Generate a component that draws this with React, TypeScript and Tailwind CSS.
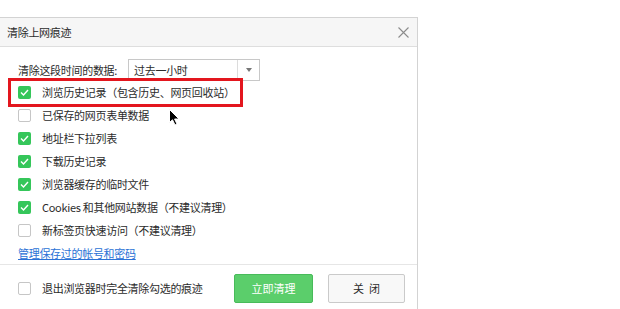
import type { ReactNode } from "react";

const font = { fontFamily: '"Noto Sans CJK SC", "Microsoft YaHei", sans-serif' };

type Item = { label: string; checked: boolean };

const items: Item[] = [
  { label: "浏览历史记录（包含历史、网页回收站）", checked: true },
  { label: "已保存的网页表单数据", checked: false },
  { label: "地址栏下拉列表", checked: true },
  { label: "下载历史记录", checked: true },
  { label: "浏览器缓存的临时文件", checked: true },
  { label: "Cookies 和其他网站数据（不建议清理）", checked: true },
  { label: "新标签页快速访问（不建议清理）", checked: false },
];

const txt = "text-[11px] tracking-[-0.3px] text-[#2b2b2b]";

function Checkbox({ checked }: { checked: boolean }) {
  if (!checked) {
    return <span className="h-[13px] w-[13px] shrink-0 rounded-[2px] border border-[#c6c6c6] bg-white" />;
  }
  return (
    <span className="flex h-[13px] w-[13px] shrink-0 items-center justify-center rounded-[2px] bg-[#35c65a]">
      <svg width="9" height="7" viewBox="0 0 9 7" fill="none">
        <path d="M1 3.5 L3.5 6 L8 1" stroke="#fff" strokeWidth="1.4" />
      </svg>
    </span>
  );
}

function Row({ item, children }: { item: Item; children?: ReactNode }) {
  return (
    <div className="relative flex h-[23px] items-center gap-[11px]">
      <Checkbox checked={item.checked} />
      <span className={txt}>{item.label}</span>
      {children}
    </div>
  );
}

function Cursor() {
  return (
    <svg className="absolute left-[151px] top-[28px]" width="11" height="17" viewBox="0 0 11 17">
      <path d="M0.5 0.5 L0.5 13.5 L3.5 10.8 L6 16 L8 15 L5.6 10 L10 10 Z" fill="#000" stroke="#fff" strokeWidth="1" />
    </svg>
  );
}

export default function App() {
  return (
    <div className="h-[309px] w-[620px] overflow-hidden bg-white pt-[17px]" style={font}>
      <div className="flex h-[300px] w-[418px] flex-col border-r border-t border-[#d3d3d3] bg-white">
        <div className="flex h-[29px] items-center justify-between border-b border-[#dedede] bg-[#f6f6f6] pl-[7px] pr-[8px]">
          <span className={txt}>清除上网痕迹</span>
          <svg width="11" height="11" viewBox="0 0 11 11">
            <path d="M0.5 0.5 L10.5 10.5 M10.5 0.5 L0.5 10.5" stroke="#8c8c8c" strokeWidth="1.1" />
          </svg>
        </div>

        <div className="pl-[18px]">
          <div className="mt-[12px] flex h-[22px] items-center">
            <span className={txt}>清除这段时间的数据:</span>
            <div className="ml-[11px] flex h-[22px] w-[132px] border border-[#c8c8c8] bg-white">
              <span className={`flex flex-1 items-center pl-[5px] ${txt}`}>过去一小时</span>
              <span className="flex w-[22px] items-center justify-center border-l border-[#dcdcdc]">
                <svg width="6" height="4" viewBox="0 0 6 4">
                  <path d="M0 0 L6 0 L3 4 Z" fill="#777" />
                </svg>
              </span>
            </div>
          </div>

          {items.map((item, i) => (
            <Row key={item.label} item={item}>
              {i === 0 ? (
                <>
                  <span className="pointer-events-none absolute -top-[3px] left-[-10px] h-[29px] w-[235px] border-[3px] border-[#e3161e]" />
                  <Cursor />
                </>
              ) : null}
            </Row>
          ))}

          <div className="flex h-[22px] items-center">
            <a className="text-[11px] tracking-[-0.3px] text-[#2b72d6] underline">管理保存过的帐号和密码</a>
          </div>
        </div>

        <div className="flex flex-1 items-start border-t border-[#e6e6e6] pl-[18px] pr-[12px] pt-[9px]">
          <div className="flex h-[29px] flex-1 items-center gap-[11px]">
            <Checkbox checked={false} />
            <span className={txt}>退出浏览器时完全清除勾选的痕迹</span>
          </div>
          <button
            type="button"
            className="h-[29px] w-[79px] rounded-[2px] border border-[#48bb5a] bg-[#5bce6b] text-[11px] text-white"
          >
            立即清理
          </button>
          <button
            type="button"
            className="ml-[15px] h-[29px] w-[77px] rounded-[2px] border border-[#cacaca] bg-[#f8f8f8] text-[11px] text-[#2b2b2b]"
          >
            关&nbsp;&nbsp;闭
          </button>
        </div>
      </div>
    </div>
  );
}
